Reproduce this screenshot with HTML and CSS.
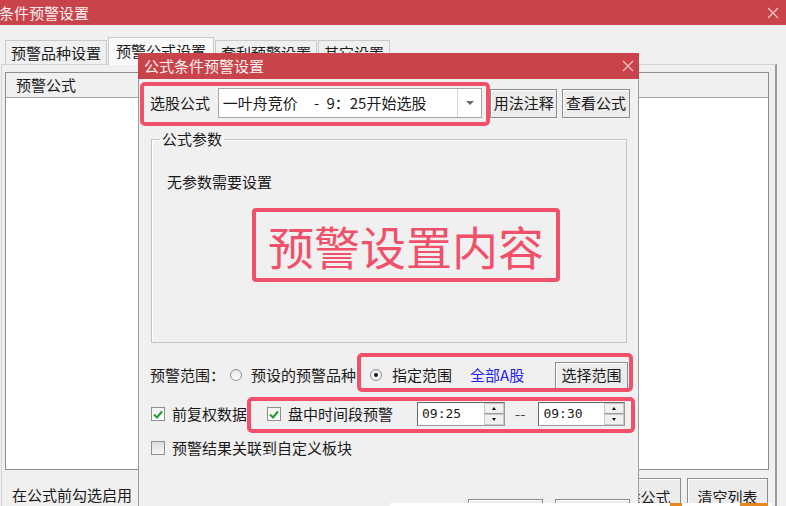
FILE: index.html
```html
<!DOCTYPE html>
<html lang="zh-CN">
<head>
  <meta charset="UTF-8" />
  <title>条件预警设置</title>
  <link rel="stylesheet" href="styles.css">
</head>
<body>

<!-- Main window -->
<div class="win-title">
  <span class="title-text">条件预警设置</span>
  <svg class="close-x" width="12" height="12" viewBox="0 0 12 12"><path d="M1 1L11 11M11 1L1 11" /></svg>
</div>

<div class="tabs">
  <div class="tab">预警品种设置</div>
  <div class="tab active">预警公式设置</div>
  <div class="tab">套利预警设置</div>
  <div class="tab">其它设置</div>
</div>

<div class="panel">
  <div class="listbox">
    <div class="list-head">预警公式</div>
    <div class="list-body"></div>
  </div>
  <div class="panel-foot">
    <span class="hint">在公式前勾选启用</span>
    <button class="btn foot-btn">删除公式</button>
    <button class="btn foot-btn">清空列表</button>
  </div>
</div>

<!-- Dialog -->
<div class="dialog">
  <div class="dlg-title">
    <span>公式条件预警设置</span>
    <svg class="close-x" width="12" height="12" viewBox="0 0 12 12"><path d="M1 1L11 11M11 1L1 11" /></svg>
  </div>

  <div class="dlg-body">
    <div class="formula-row">
      <span class="row-label">选股公式</span>
      <div class="combo">
        <span class="combo-text">一叶舟竞价<span class="combo-tail">- 9：25开始选股</span></span>
        <span class="combo-arrow"><i></i></span>
      </div>
      <button class="btn btn-note">用法注释</button>
      <button class="btn btn-view">查看公式</button>
    </div>

    <fieldset class="group">
      <legend>公式参数</legend>
      <p class="no-param">无参数需要设置</p>
      <div class="big-note">预警设置内容</div>
    </fieldset>

    <div class="range-row">
      <span>预警范围：</span>
      <span class="radio r1"></span>
      <span class="opt1">预设的预警品种</span>
      <span class="radio checked r2"><i></i></span>
      <span class="opt2">指定范围</span>
      <span class="all-a">全部A股</span>
      <button class="btn btn-range">选择范围</button>
    </div>

    <div class="check-row">
      <span class="check on"><svg width="10" height="9" viewBox="0 0 10 9"><path d="M1 4.5L4 7.5L9 1.5" /></svg></span>
      <span class="ck-label">前复权数据</span>
      <span class="check on c2"><svg width="10" height="9" viewBox="0 0 10 9"><path d="M1 4.5L4 7.5L9 1.5" /></svg></span>
      <span class="ck-label">盘中时间段预警</span>
      <div class="spin s1">
        <span class="spin-val">09:25</span>
        <span class="spin-btns"><span class="up"><i></i></span><span class="down"><i></i></span></span>
      </div>
      <span class="dash">--</span>
      <div class="spin s2">
        <span class="spin-val">09:30</span>
        <span class="spin-btns"><span class="up"><i></i></span><span class="down"><i></i></span></span>
      </div>
    </div>

    <div class="link-row">
      <span class="check"></span>
      <span class="ck-label">预警结果关联到自定义板块</span>
    </div>

    <div class="dlg-foot">
      <button class="btn dlg-btn">确定</button>
      <button class="btn dlg-btn">取消</button>
    </div>
  </div>

  <!-- annotation boxes -->
  <div class="mark m1"></div>
  <div class="mark m2"></div>
  <div class="mark m3"></div>
</div>

<div class="bottom-strip"></div>
<div class="orange o1"></div>
<div class="orange o2"></div>

</body>
</html>
```

FILE: styles.css
```css
* {
  box-sizing: border-box;
}
body {
  margin: 0;
  width: 786px;
  height: 506px;
  overflow: hidden;
  position: relative;
  background: #f0f0f0;
  font-family: "Noto Sans CJK SC", "Noto Sans", sans-serif;
  font-size: 15px;
  line-height: 20px;
  color: #1a1a1a;
}
button {
  font: inherit;
  color: inherit;
}

/* Title bars */
.win-title {
  height: 25px;
  background: #c8434a;
  color: #fdf0f0;
  display: flex;
  align-items: center;
  justify-content: space-between;
  padding-right: 7px;
}
.win-title .title-text {
  margin-left: -1px;
}
.close-x path {
  stroke: #f3c3c6;
  stroke-width: 1.3;
  fill: none;
}

/* Tabs */
.tabs {
  display: flex;
  align-items: flex-end;
  height: 39px;
  padding-left: 5px;
}
.tab {
  height: 24px;
  line-height: 23px;
  padding: 0 5px;
  margin-right: 1px;
  border: 1px solid #c9c9c9;
  border-bottom: none;
  background: #f0f0f0;
}
.tab.active {
  height: 28px;
  line-height: 25px;
  padding: 0 7px;
  margin-bottom: -1px;
  background: #f9f9f9;
  position: relative;
}

/* Panel with list */
.panel {
  margin: 0 9px 0 1px;
  height: 460px;
  border: 1px solid #d3d3d3;
  border-right: 2px solid #9a9a9a;
  padding: 7px 6px 0 3px;
}
.listbox {
  height: 398px;
  border: 1px solid #8d8d8d;
  background: #fff;
  display: flex;
  flex-direction: column;
}
.list-head {
  height: 25px;
  line-height: 24px;
  padding-left: 10px;
  background: #f0f0f0;
  border-bottom: 1px solid #a3a3a3;
}
.panel-foot {
  display: flex;
  align-items: flex-start;
  padding-top: 8px;
}
.hint {
  margin: 7px 0 0 7px;
}
.btn {
  background: #ececec;
  border: 1px solid #8c8c8c;
  box-shadow: inset 1px 1px 0 #fff;
  padding: 0;
  text-align: center;
}
.foot-btn {
  width: 81px;
  height: 38px;
}
.foot-btn:first-of-type {
  margin-left: auto;
}
.foot-btn + .foot-btn {
  margin: 0 1px 0 6px;
}

/* Dialog window */
.dialog {
  position: absolute;
  left: 138px;
  top: 53px;
  width: 501px;
  height: 470px;
  background: #f0f0f0;
  border: 1px solid #9c9c9c;
  border-top: none;
}
.dlg-title {
  height: 26px;
  background: #c8434a;
  color: #fdf0f0;
  display: flex;
  align-items: center;
  justify-content: space-between;
  padding: 0 5px 0 6px;
  margin: 0 -1px;
}
.dlg-body {
  padding: 9px 8px 0 11px;
}
.formula-row {
  display: flex;
  align-items: center;
  height: 30px;
}
.row-label {
  width: 68px;
}
.combo {
  width: 265px;
  height: 30px;
  background: #fff;
  border: 1px solid #a6a6a6;
  display: flex;
  align-items: center;
}
.combo-text {
  flex: 1;
  padding-left: 4px;
  white-space: nowrap;
}
.combo-tail {
  margin-left: 16px;
  word-spacing: 4px;
}
.combo-arrow {
  width: 24px;
  height: 100%;
  border-left: 1px solid #d4d4d4;
  display: flex;
  align-items: center;
  justify-content: center;
}
.combo-arrow i {
  border-left: 4px solid transparent;
  border-right: 4px solid transparent;
  border-top: 4px solid #6a6a6a;
}
.btn-note {
  width: 67px;
  height: 29px;
  margin-left: 8px;
}
.btn-view {
  width: 68px;
  height: 29px;
  margin-left: 5px;
}

/* Group box */
.group {
  margin: 11px 0 0 1px;
  width: 476px;
  height: 214px;
  padding: 0 8px;
  border: 1px solid #c4c4c4;
  box-shadow: inset 1px 1px 0 #fff;
}
.group legend {
  padding: 0 2px;
  line-height: 20px;
}
.no-param {
  margin: 23px 0 0 7px;
}
.big-note {
  margin: 16px 0 0 92px;
  width: 308px;
  height: 74px;
  border: 4px solid #f0506a;
  border-radius: 4px;
  color: #f0506a;
  font-size: 46px;
  line-height: 66px;
  text-align: center;
  white-space: nowrap;
}

/* Option rows */
.range-row,
.check-row,
.link-row {
  display: flex;
  align-items: center;
}
.range-row {
  height: 28px;
  margin-top: 18px;
}
.radio {
  width: 12px;
  height: 12px;
  border-radius: 50%;
  border: 1px solid #8f8f8f;
  background: linear-gradient(#e6e6e6, #ffffff);
  display: flex;
  align-items: center;
  justify-content: center;
}
.radio i {
  width: 4px;
  height: 4px;
  border-radius: 50%;
  background: #1a1a1a;
}
.r1 { margin-left: 5px; }
.opt1 { margin-left: 9px; }
.r2 { margin-left: 14px; }
.opt2 { margin-left: 10px; }
.all-a {
  margin-left: 18px;
  color: #2222f2;
}
.btn-range {
  width: 73px;
  height: 27px;
  margin: 0 2px 0 auto;
}

.check-row {
  height: 28px;
  margin-top: 11px;
}
.check {
  width: 14px;
  height: 14px;
  margin-left: 1px;
  border: 1px solid #8f8f8f;
  background: linear-gradient(#dcdcdc, #f7f7f7);
  display: flex;
  align-items: center;
  justify-content: center;
}
.check.on {
  background: linear-gradient(#f2f2f2, #ffffff);
}
.check path {
  stroke: #1f9b2a;
  stroke-width: 2;
  fill: none;
}
.ck-label {
  margin-left: 7px;
}
.c2 { margin-left: 20px; }
.spin {
  height: 24px;
  background: #fff;
  border: 1px solid #9a9a9a;
  border-top-color: #6a6a6a;
  border-left-color: #6a6a6a;
  display: flex;
  align-items: center;
  font-family: "DejaVu Sans Mono", monospace;
  font-size: 13px;
}
.s1 {
  width: 88px;
  margin-left: 24px;
}
.s2 {
  width: 87px;
  margin-left: 13px;
}
.spin-val {
  padding-left: 4px;
}
.spin-btns {
  margin-left: auto;
  width: 20px;
  height: 100%;
  display: flex;
  flex-direction: column;
}
.spin-btns span {
  flex: 1;
  background: #f0f0f0;
  border: 1px solid #c8c8c8;
  display: flex;
  align-items: center;
  justify-content: center;
}
.spin-btns .up { border-bottom-color: #9a9a9a; }
.up i {
  border-left: 2px solid transparent;
  border-right: 2px solid transparent;
  border-bottom: 3px solid #111;
}
.down i {
  border-left: 2px solid transparent;
  border-right: 2px solid transparent;
  border-top: 3px solid #111;
}
.dash {
  margin-left: 10px;
  color: #444;
}

.link-row {
  height: 20px;
  margin-top: 10px;
}

.dlg-foot {
  display: flex;
  justify-content: flex-end;
  gap: 12px;
  margin-top: 41px;
}
.dlg-btn {
  width: 75px;
  height: 30px;
}

/* Red annotation frames drawn over the dialog */
.mark {
  position: absolute;
  border: 4px solid #f0506a;
  border-radius: 5px;
}
.m1 { left: 1px;   top: 29px;  width: 350px; height: 44px; }
.m2 { left: 218px; top: 300px; width: 276px; height: 39px; }
.m3 { left: 108px; top: 344px; width: 388px; height: 36px; }

/* bits of the next picture along the bottom edge */
.bottom-strip {
  position: absolute;
  left: 390px;
  top: 503px;
  width: 382px;
  height: 3px;
  background: #fff;
}
.orange {
  position: absolute;
  top: 503px;
  height: 3px;
  background: #e8871f;
}
.o1 { left: 670px; width: 12px; }
.o2 { left: 740px; width: 28px; }
```
